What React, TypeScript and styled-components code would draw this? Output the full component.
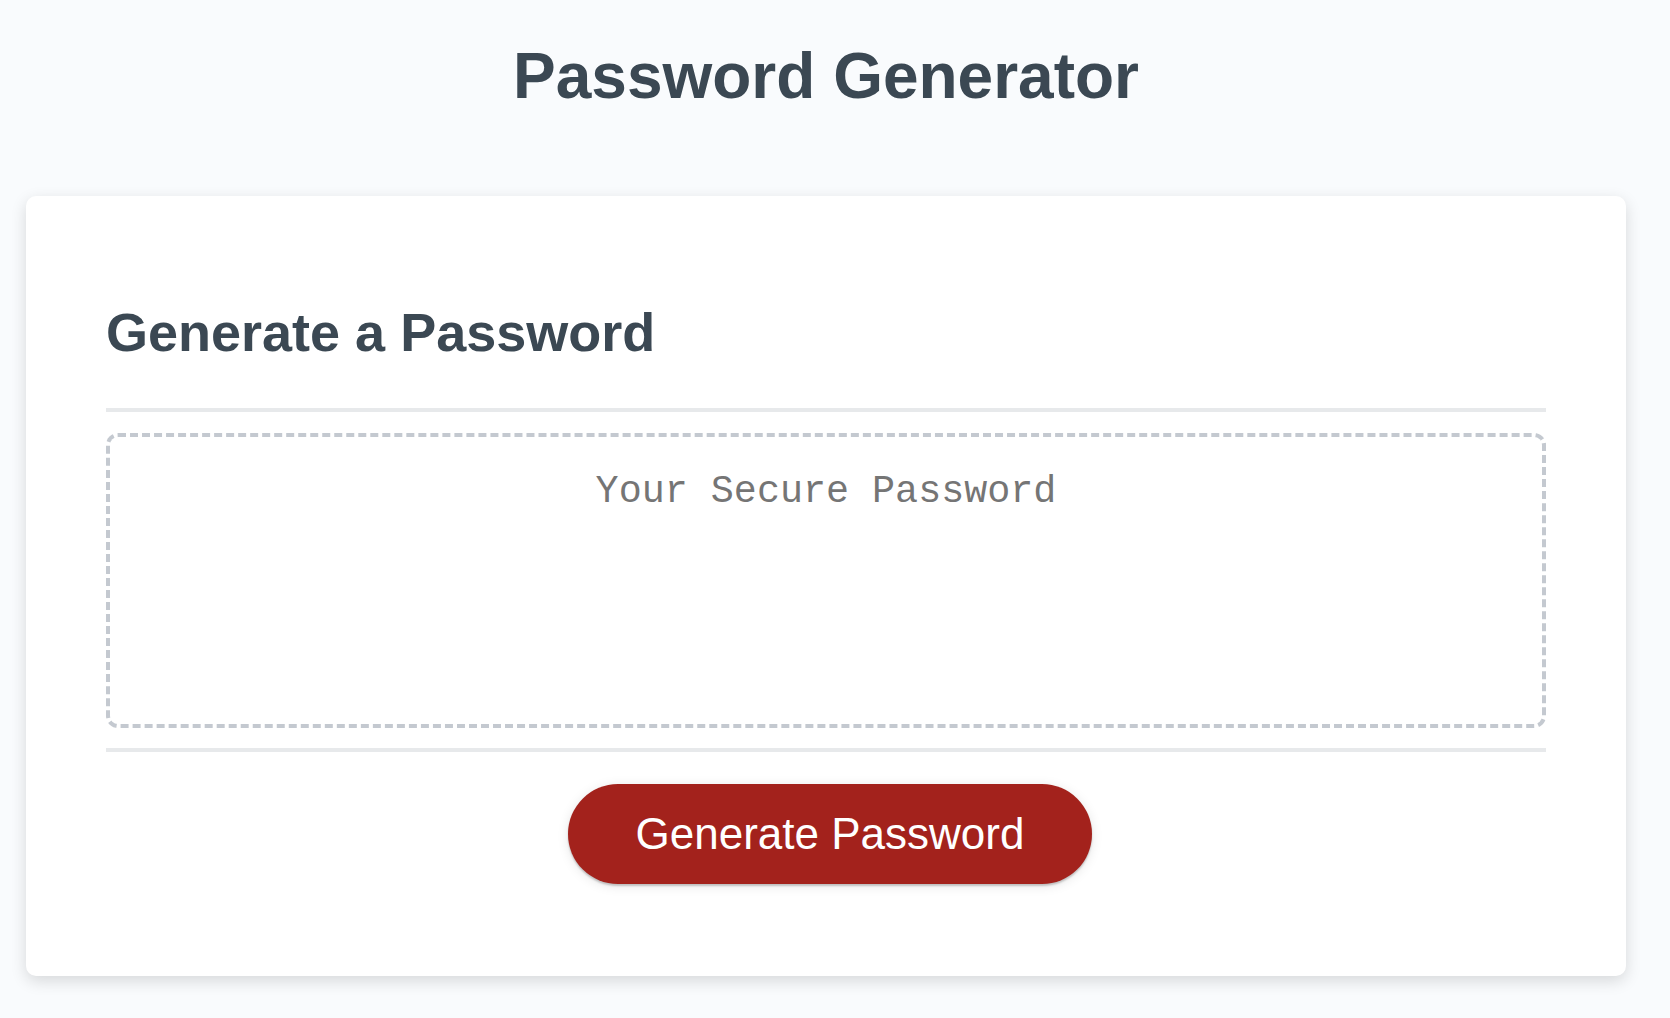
import { useState } from 'react';
import styled, { createGlobalStyle } from 'styled-components';

const GlobalStyle = createGlobalStyle`
  *, *::before, *::after {
    box-sizing: border-box;
  }
  html, body {
    margin: 0;
    padding: 0;
  }
  body {
    font-family: "Liberation Sans", Arial, Helvetica, sans-serif;
    background-color: #f9fbfd;
  }
`;

const charset = 'abcdefghijklmnopqrstuvwxyzABCDEFGHIJKLMNOPQRSTUVWXYZ0123456789!@#$%^&*';

const App = () => {
  const [password, setPassword] = useState('');

  const generate = () => {
    const out = Array(16)
      .fill(null)
      .map(() => charset[Math.floor(Math.random() * charset.length)])
      .join('');
    setPassword(out);
  };

  return (
    <Wrapper>
      <GlobalStyle />
      <Header>
        <Title>Password Generator</Title>
      </Header>
      <Card>
        <CardHeader>
          <CardTitle>Generate a Password</CardTitle>
        </CardHeader>
        <CardBody>
          <PasswordBox
            readOnly
            rows={2}
            placeholder="Your Secure Password"
            aria-label="Generated Password"
            value={password}
          />
        </CardBody>
        <CardFooter>
          <Button onClick={generate}>Generate Password</Button>
        </CardFooter>
      </Card>
    </Wrapper>
  );
};

const Wrapper = styled.div`
  padding: 0 44px 42px 26px;
`;

const Header = styled.header`
  text-align: center;
  padding: 0 40px 40px;
  color: #3b4853;
`;

const Title = styled.h1`
  font-size: 64px;
  font-weight: bold;
  margin: 39px 0 43px;
`;

const Card = styled.section`
  background-color: #fff;
  border-radius: 10px;
  box-shadow: rgba(0, 0, 0, 0.14) 0px 5px 16px 0px;
  color: #3b4853;
  font-size: 36px;
  margin: 0 auto;
  max-width: 1600px;
  padding: 60px 80px;
`;

const CardHeader = styled.div`
  &::after {
    content: ' ';
    display: block;
    width: 100%;
    height: 4px;
    background: #e7e9eb;
  }
`;

const CardTitle = styled.h2`
  font-size: 54px;
  font-weight: bold;
  margin: 45px 0 45px;
`;

const CardBody = styled.div`
  min-height: 200px;
`;

const PasswordBox = styled.textarea`
  appearance: none;
  display: block;
  width: 100%;
  padding: 33px 30px 166px;
  font-family: "Liberation Mono", "Courier New", monospace;
  font-size: 38.4px;
  color: #3b4853;
  text-align: center;
  margin: 21px 0 20px;
  border: 4px dashed #c4c9d0;
  border-radius: 12px;
  resize: none;
  overflow: hidden;
  outline: none;

  &::placeholder {
    color: #757575;
  }
`;

const CardFooter = styled.div`
  text-align: center;

  &::before {
    content: ' ';
    display: block;
    width: 100%;
    height: 4px;
    background: #e7e9eb;
  }
`;

const Button = styled.button`
  border: none;
  background-color: #a3221c;
  border-radius: 50px;
  box-shadow: rgba(0, 0, 0, 0.1) 0px 2px 12px 0px, rgba(0, 0, 0, 0.2) 0px 2px 2px 0px;
  color: #fff;
  display: inline-block;
  font-family: "Liberation Sans", Arial, Helvetica, sans-serif;
  font-size: 44px;
  line-height: 44px;
  margin: 32px 32px 32px 40px;
  padding: 28px 68px;
  text-align: center;
  cursor: pointer;
`;

export default App;
